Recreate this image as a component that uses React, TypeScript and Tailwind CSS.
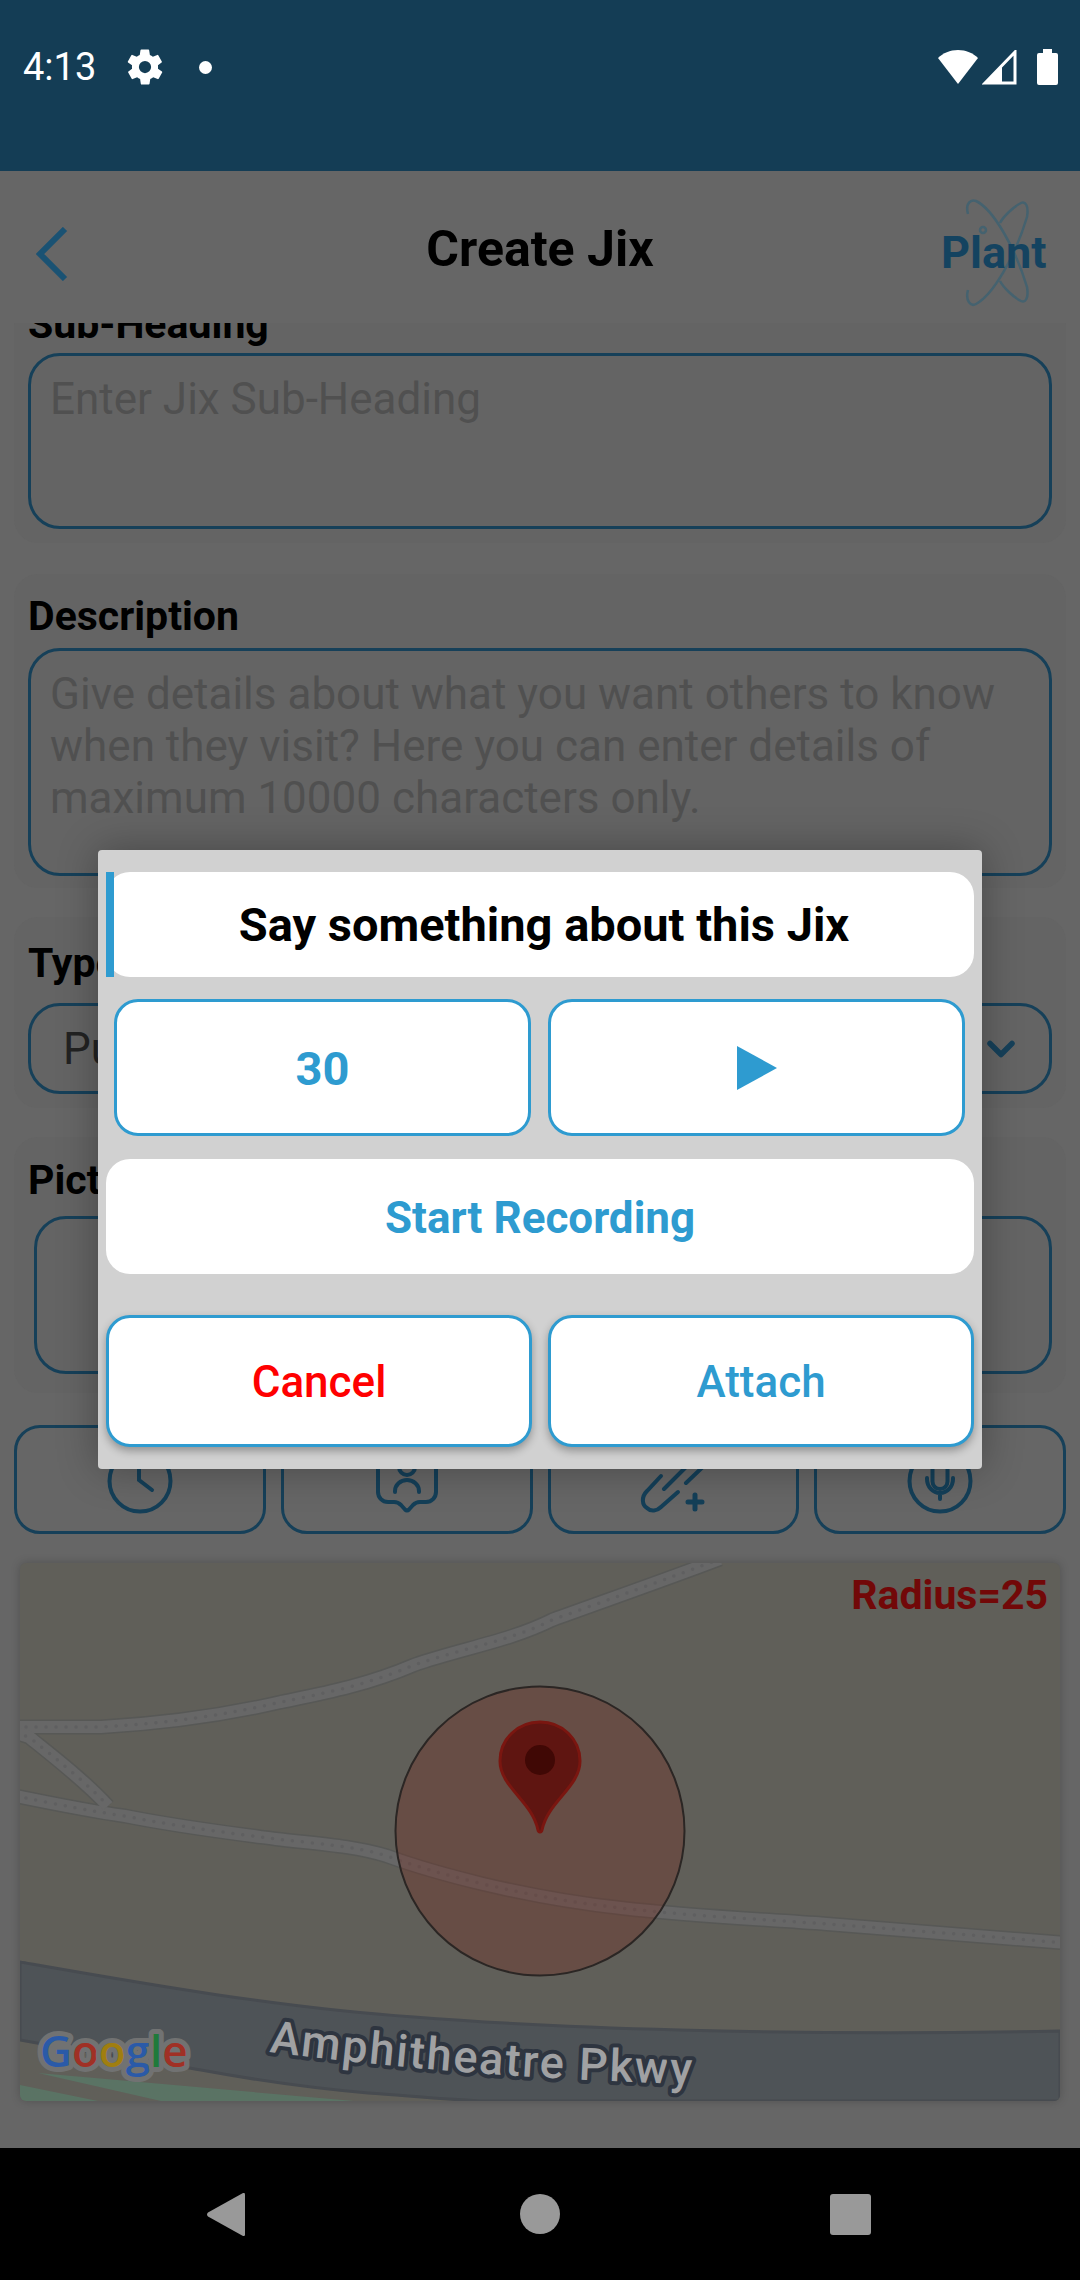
import {ReactNode} from 'react';
import {ChevronDown} from 'lucide-react';

function StatusBar() {
  return (
    <div className="flex h-[171px] shrink-0 items-start justify-between bg-[#143d55] pl-[23px] pr-[22px] pt-[49px] text-white">
      <div className="flex h-[36px] items-center">
        <span className="text-[38px] leading-[36px] text-white">4:13</span>
        <svg viewBox="0 0 24 24" className="ml-[28px] h-[42px] w-[42px] fill-white">
          <path d="M19.4 13a7.5 7.5 0 0 0 0-2l2.1-1.6a.5.5 0 0 0 .1-.6l-2-3.5a.5.5 0 0 0-.6-.2l-2.5 1a7.3 7.3 0 0 0-1.7-1l-.4-2.6a.5.5 0 0 0-.5-.5h-4a.5.5 0 0 0-.5.4l-.4 2.7a7.6 7.6 0 0 0-1.7 1l-2.500-1a.5.5 0 0 0-.6.2l-2 3.5a.5.5 0 0 0 .1.6L4.600 11a7.900 7.900 0 0 0 0 2l-2.100 1.600a.5.5 0 0 0-.1.6l2 3.500c.1.2.4.3.6.2l2.500-1c.5.4 1.100.7 1.700 1l.4 2.600c0 .3.2.5.5.5h4c.3 0 .5-.2.5-.4l.4-2.700a7.600 7.600 0 0 0 1.700-1l2.500 1c.2.1.5 0 .6-.2l2-3.500a.5.5 0 0 0-.1-.6zM12 15.500a3.500 3.500 0 1 1 0-7 3.500 3.500 0 0 1 0 7z" />
        </svg>
        <span className="ml-[33px] h-[13px] w-[13px] rounded-full bg-white" />
      </div>
      <div className="flex h-[36px] items-center">
        <svg viewBox="0 0 40 34" className="h-[34px] w-[40px] fill-white">
          <path d="M20 0C12 0 5 3 0 8l20 26L40 8C35 3 28 0 20 0z" />
        </svg>
        <svg viewBox="0 0 35 35" className="ml-[4px] h-[35px] w-[35px]">
          <path d="M33 2v31H3z" fill="none" stroke="#fff" strokeWidth="3" />
          <path d="M0 35 20 15v18H3z" fill="#fff" />
        </svg>
        <svg viewBox="0 0 21 36" className="ml-[20px] h-[36px] w-[21px] fill-white">
          <path d="M6 0h9v4h4a2 2 0 0 1 2 2v28a2 2 0 0 1-2 2H2a2 2 0 0 1-2-2V6a2 2 0 0 1 2-2h4z" />
        </svg>
      </div>
    </div>
  );
}

function Header() {
  return (
    <div className="relative flex h-[152px] shrink-0 items-center justify-center bg-[#666666]">
      <svg viewBox="0 0 32 54" className="absolute left-[36px] top-[56px] h-[54px] w-[32px]" fill="none">
        <path d="M29 2 4 27l25 25" stroke="#1a5273" strokeWidth="6" />
      </svg>
      <h1 className="pt-[3px] text-[50px] font-bold leading-[60px] text-black">Create Jix</h1>
      <div className="absolute right-[34px] top-[26px] h-[112px] w-[103px]">
        <svg viewBox="0 0 103 112" className="absolute inset-0" fill="none" stroke="#45626f" strokeWidth="2.500">
          <path d="M25 17C22 6 28 2 33 4C50 12 72 50 84 90C86 102 82 106 78 104C70 100 60 90 57 84" />
          <path d="M25 93C22 104 28 110 33 107C50 98 72 60 84 20C86 8 82 4 78 6C70 10 60 20 57 26" />
          <circle cx="40" cy="33" r="3" />
        </svg>
        <span className="absolute left-[-2px] top-[31px] text-[45px] font-bold leading-[50px] text-[#144360]">Plant</span>
      </div>
    </div>
  );
}

function Label({children}: {children: ReactNode}) {
  return <div className="ml-[14px] text-[41px] font-bold leading-[44px] text-black">{children}</div>;
}

function ClockIcon() {
  return (
    <svg viewBox="0 0 70 70" className="h-[70px] w-[70px]" fill="none" stroke="#143f58" strokeWidth="4" strokeLinecap="round">
      <circle cx="35" cy="36" r="30.500" />
      <path d="M34 18v17l13 10" />
    </svg>
  );
}

function PinPersonIcon() {
  return (
    <svg viewBox="0 0 70 70" className="h-[70px] w-[70px]" fill="none" stroke="#143f58" strokeWidth="4" strokeLinecap="round">
      <path d="M6 8V47a10 10 0 0 0 10 10h6Q26 57 29 60l4 4.500q2 2 4 0l4-4.500Q44 57 48 57h6a10 10 0 0 0 10-10V8a4 4 0 0 0-4-4H10a4 4 0 0 0-4 4z" />
      <circle cx="35" cy="22" r="8" />
      <path d="M23 47v-1a12 11 0 0 1 24 0v1" />
    </svg>
  );
}

function ClipPlusIcon() {
  return (
    <svg viewBox="0 0 70 70" className="h-[70px] w-[70px]" fill="none" stroke="#143f58" strokeWidth="4" strokeLinecap="round">
      <path d="M23 31 9 46C3 52 4 60 9 63c4 4 10 3 14-1l17-15" />
      <path d="M26 44 52 18M48 38 69 18" />
      <path d="M57 50v14M50 57h14" strokeWidth="5" />
    </svg>
  );
}

function MicCircleIcon() {
  return (
    <svg viewBox="0 0 70 70" className="h-[70px] w-[70px]" fill="none" stroke="#143f58" strokeWidth="4" strokeLinecap="round">
      <circle cx="35" cy="36" r="30.500" />
      <rect x="27.500" y="14" width="15" height="30" rx="7.500" />
      <path d="M22 33v1a13 14 0 0 0 26 0v-1M35 48v6" />
    </svg>
  );
}

function MapView() {
  const road1 = 'M-4 164H81C150 160 205 152 261 139C300 131 345 123 394 102C440 86 490 78 532 57C590 36 650 15 700 -4';
  const road2 = 'M-4 233C40 242 70 248 105 253C160 264 210 270 256 276C300 281 335 283 367 293C400 305 430 313 463 321C510 332 555 340 601 345C670 353 740 356 807 361C885 367 965 373 1045 380';
  const ramp = 'M-4 170 9 174C35 195 65 218 88 243';
  const roads = [road1, road2, ramp];

  return (
    <div className="relative mx-[20px] mt-[29px] h-[538px] overflow-hidden rounded-[6px] bg-[#605f59] shadow-[0_0_10px_rgba(0,0,0,0.22)]">
      <svg viewBox="0 0 1040 538" className="absolute inset-0 h-full w-full" fill="none">
        <path d="M0 399C120 420 260 445 394 454C520 464 760 474 1040 468V538H460C420 536 390 533 348 530C290 525 235 517 181 507C120 497 60 488 0 477z" fill="#4e5357" stroke="#474b50" strokeWidth="3" />
        <path d="M18 510 334 538H141zM0 522 78 538H0z" fill="#5a7364" />
        {roads.map((d) => (
          <path key={d} d={d} stroke="#575856" strokeWidth="15" />
        ))}
        {roads.map((d) => (
          <path key={d} d={d} stroke="#676767" strokeWidth="12" />
        ))}
        {roads.map((d) => (
          <path key={d} d={d} stroke="#5f5f60" strokeWidth="3.500" strokeLinecap="round" strokeDasharray="0 10" />
        ))}
        <circle cx="520" cy="268" r="144.500" fill="#7b1c10" fillOpacity="0.27" stroke="#2b2624" strokeWidth="2" />
        <path d="M520 159c-22 0-40 17-40 39 0 26 32 40 38 69 .4 2.500 3.600 2.500 4 0 6-29 38-43 38-69 0-22-18-39-40-39z" fill="#5f1511" stroke="#7a1610" strokeWidth="3" />
        <circle cx="520" cy="197" r="15" fill="#400805" />
        <path id="amphitheatre" d="M249 489C360 503 520 519 720 522" />
        <text
          fontFamily="Roboto, sans-serif"
          fontSize="45"
          fontWeight="500"
          letterSpacing="2"
          fill="#a0a1a3"
          stroke="#2e3540"
          strokeWidth="8"
          strokeLinejoin="round"
          paintOrder="stroke"
        >
          <textPath href="#amphitheatre">Amphitheatre Pkwy</textPath>
        </text>
        <text x="20" y="504" fontFamily="'Open Sans', sans-serif" fontSize="44" fontWeight="600" stroke="#717272" strokeWidth="10" strokeLinejoin="round" paintOrder="stroke">
          <tspan fill="#2a5aa8">G</tspan>
          <tspan fill="#a03025">o</tspan>
          <tspan fill="#a07e10">o</tspan>
          <tspan fill="#2a5aa8">g</tspan>
          <tspan fill="#1f7a3a">l</tspan>
          <tspan fill="#a03025">e</tspan>
        </text>
      </svg>
      <span className="absolute right-[12px] top-[10px] text-[41px] font-bold leading-[44px] text-[#720808]">Radius=25</span>
    </div>
  );
}

function Form() {
  const card = 'mx-[14px] rounded-[24px] bg-[#646464]';
  const field = 'rounded-[32px] border-[3px] border-[#164059]';
  const placeholder = 'text-[44px] leading-[52px] text-[#505050]';

  return (
    <div className="min-h-0 flex-1 overflow-hidden bg-[#666666]">
      <div className="-mt-[21px]">
        <section className={`${card} pb-[14px]`}>
          <Label>Sub-Heading</Label>
          <div className={`mx-[14px] mt-[7px] h-[176px] px-[19px] pt-[17px] ${field} ${placeholder}`}>Enter Jix Sub-Heading</div>
        </section>

        <section className={`${card} mt-[31px] pb-[12px] pt-[20px]`}>
          <Label>Description</Label>
          <div className={`mx-[14px] mt-[10px] h-[228px] px-[19px] pt-[17px] ${field} ${placeholder}`}>
            Give details about what you want others to know when they visit? Here you can enter details of maximum 10000 characters only.
          </div>
        </section>

        <section className={`${card} mt-[29px] pb-[14px] pt-[24px]`}>
          <Label>Type</Label>
          <div className={`mx-[14px] mt-[18px] flex h-[91px] items-center justify-between pl-[32px] pr-[26px] ${field}`}>
            <span className="text-[44px] text-[#222222]">Public</span>
            <ChevronDown className="h-[44px] w-[44px] text-[#164059]" strokeWidth={3} />
          </div>
        </section>

        <section className={`${card} mt-[29px] pb-[19px] pt-[21px]`}>
          <Label>Pictures</Label>
          <div className={`ml-[20px] mr-[14px] mt-[14px] h-[158px] ${field}`} />
        </section>

        <div className="mx-[14px] mt-[32px] grid grid-cols-4 gap-[15px]">
          {[ClockIcon, PinPersonIcon, ClipPlusIcon, MicCircleIcon].map((Icon, i) => (
            <div key={i} className="flex h-[109px] items-center justify-center rounded-[26px] border-[3px] border-[#164059]">
              <Icon />
            </div>
          ))}
        </div>

        <MapView />
      </div>
    </div>
  );
}

function NavBar() {
  return (
    <div className="relative h-[132px] shrink-0 bg-black">
      <svg viewBox="0 0 38 43" className="absolute left-[207px] top-[45px] h-[43px] w-[38px]">
        <path d="M36 0c1-.5 2 .2 2 1.500v40c0 1.300-1 2-2 1.500L1 23.500c-1.300-1-1.300-3 0-4z" fill="#999999" />
      </svg>
      <span className="absolute left-[520px] top-[46px] h-[40px] w-[40px] rounded-full bg-[#999999]" />
      <span className="absolute left-[830px] top-[46px] h-[41px] w-[41px] rounded-[3px] bg-[#999999]" />
    </div>
  );
}

function Dialog() {
  const outlined = 'flex items-center justify-center rounded-[24px] border-[3px] border-[#2e9bd0] bg-white';

  return (
    <div className="absolute left-[98px] top-[850px] h-[619px] w-[884px] rounded-[4px] bg-[#d1d1d1] px-[8px] pt-[22px] shadow-[0_0_40px_rgba(0,0,0,0.3)]">
      <div className="relative flex h-[105px] items-center justify-center rounded-[24px] bg-white pl-[8px] pt-[2px]">
        <span className="absolute bottom-0 left-0 top-0 w-[8px] bg-[#2e9bd0]" />
        <span className="text-[47px] font-bold text-black">Say something about this Jix</span>
      </div>

      <div className="mt-[22px] flex gap-[17px] pl-[8px] pr-[9px]">
        <div className={`${outlined} h-[137px] flex-1 pt-[3px] text-[47px] font-bold text-[#2e9bd0]`}>30</div>
        <div className={`${outlined} h-[137px] flex-1`}>
          <svg viewBox="0 0 40 44" className="h-[44px] w-[40px] fill-[#2e9bd0]">
            <path d="M0 0l40 22L0 44z" />
          </svg>
        </div>
      </div>

      <div className="mt-[23px] flex h-[115px] items-center justify-center rounded-[24px] bg-white pt-[2px] text-[44px] font-bold text-[#2e9bd0]">Start Recording</div>

      <div className="mt-[41px] flex gap-[16px]">
        <div className={`${outlined} h-[132px] flex-1 pt-[2px] text-[44px] font-medium text-[#ff0000] shadow-[0_4px_8px_rgba(0,0,0,0.3)]`}>Cancel</div>
        <div className={`${outlined} h-[132px] flex-1 pt-[2px] text-[44px] font-medium text-[#2e9bd0] shadow-[0_4px_8px_rgba(0,0,0,0.3)]`}>Attach</div>
      </div>
    </div>
  );
}

export default function App() {
  return (
    <div className="relative flex h-[2280px] w-[1080px] flex-col overflow-hidden font-['Roboto',sans-serif]">
      <StatusBar />
      <Header />
      <Form />
      <NavBar />
      <Dialog />
    </div>
  );
}
